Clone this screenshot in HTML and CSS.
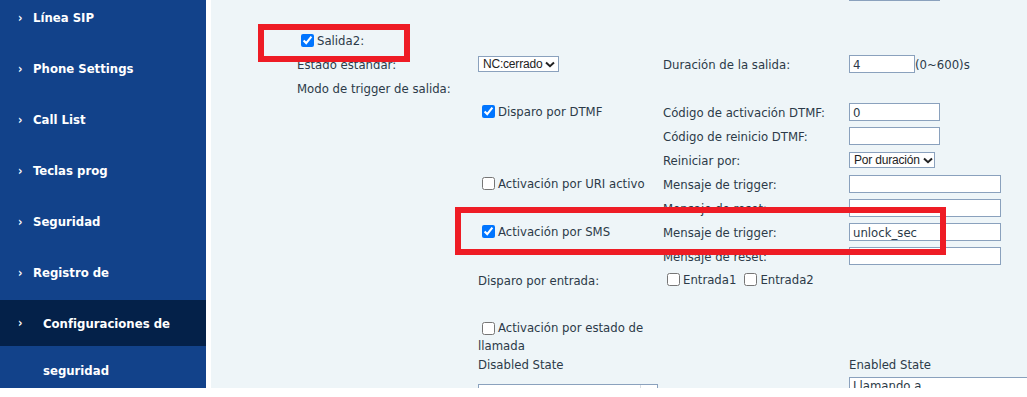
FILE: index.html
```html
<!DOCTYPE html>
<html lang="es">
<head>
<meta charset="utf-8">
<title>Configuraciones de seguridad</title>
<link rel="stylesheet" href="styles.css">
</head>
<body>
<div class="page">
  <nav class="side">
    <ul class="menu">
      <li class="item"><span class="arr">›</span><span class="lbl">Línea SIP</span></li>
      <li class="item"><span class="arr">›</span><span class="lbl">Phone Settings</span></li>
      <li class="item"><span class="arr">›</span><span class="lbl">Call List</span></li>
      <li class="item"><span class="arr">›</span><span class="lbl">Teclas prog</span></li>
      <li class="item"><span class="arr">›</span><span class="lbl">Seguridad</span></li>
      <li class="item"><span class="arr">›</span><span class="lbl">Registro de</span></li>
      <li class="item active">
        <div class="act-line"><span class="arr">›</span><span class="lbl">Configuraciones de</span></div>
        <div class="act-line2"><span class="lbl">seguridad</span></div>
      </li>
    </ul>
  </nav>
  <div class="gap"></div>
  <main class="content">
    <div class="prev"><input class="txt w91" type="text"></div>
    <div class="salida"><label class="cb"><input type="checkbox" checked><span>Salida2:</span></label></div>
    <div class="grid">
      <div class="c1">Estado estándar:</div>
      <div class="c2"><span class="sel w81"><span class="sel-txt">NC:cerrado</span><svg class="chev" width="10" height="7" viewBox="0 0 10 7"><path d="M1 1.5 L5 5.2 L9 1.5" fill="none" stroke="#222" stroke-width="2"/></svg></span></div>
      <div class="c3">Duración de la salida:</div>
      <div class="c4"><input class="txt w66" type="text" value="4"><span class="unit">(0~600)s</span></div>

      <div class="c1">Modo de trigger de salida:</div>
      <div class="c2"></div><div class="c3"></div><div class="c4"></div>

      <div class="c1"></div>
      <div class="c2"><label class="cb"><input type="checkbox" checked><span>Disparo por DTMF</span></label></div>
      <div class="c3">Código de activación DTMF:</div>
      <div class="c4"><input class="txt w91" type="text" value="0"></div>

      <div class="c1"></div><div class="c2"></div>
      <div class="c3">Código de reinicio DTMF:</div>
      <div class="c4"><input class="txt w91" type="text"></div>

      <div class="c1"></div><div class="c2"></div>
      <div class="c3">Reiniciar por:</div>
      <div class="c4"><span class="sel w86"><span class="sel-txt">Por duración</span><svg class="chev" width="10" height="7" viewBox="0 0 10 7"><path d="M1 1.5 L5 5.2 L9 1.5" fill="none" stroke="#222" stroke-width="2"/></svg></span></div>

      <div class="c1"></div>
      <div class="c2"><label class="cb"><input type="checkbox"><span>Activación por URI activo</span></label></div>
      <div class="c3">Mensaje de trigger:</div>
      <div class="c4"><input class="txt w152" type="text"></div>

      <div class="c1"></div><div class="c2"></div>
      <div class="c3">Mensaje de reset:</div>
      <div class="c4"><input class="txt w152" type="text"></div>

      <div class="c1"></div>
      <div class="c2"><label class="cb"><input type="checkbox" checked><span>Activación por SMS</span></label></div>
      <div class="c3">Mensaje de trigger:</div>
      <div class="c4"><input class="txt w152" type="text" value="unlock_sec"></div>

      <div class="c1"></div><div class="c2"></div>
      <div class="c3">Mensaje de reset:</div>
      <div class="c4"><input class="txt w152" type="text"></div>

      <div class="c1"></div>
      <div class="c2">Disparo por entrada:</div>
      <div class="c3"><label class="cb"><input type="checkbox"><span>Entrada1</span></label><label class="cb"><input type="checkbox"><span>Entrada2</span></label></div>
      <div class="c4"></div>
    </div>
    <div class="callstate">
      <label class="cb multi"><input type="checkbox"><span>Activación por estado de</span></label>
      <div class="wrapline">llamada</div>
    </div>
    <div class="states">
      <div class="st-col left">
        <div class="st-title">Disabled State</div>
        <div class="listbox"><div class="lb-bar"></div></div>
      </div>
      <div class="st-col right">
        <div class="st-title">Enabled State</div>
        <div class="textbox">Llamando a</div>
      </div>
    </div>
  </main>
  <div class="mark mark1"></div>
  <div class="mark mark2"></div>
</div>
</body>
</html>
```

FILE: styles.css
```css
html, body {
  margin: 0;
  padding: 0;
  background: #ffffff;
}
body {
  font-family: "DejaVu Sans Condensed", "DejaVu Sans", sans-serif;
  font-size: 13px;
  color: #2c3a48;
}
.page {
  position: relative;
  display: flex;
  height: 388px;
  overflow: hidden;
}
.side {
  width: 206px;
  flex: none;
  background: #12428a;
  color: #ffffff;
  font-weight: bold;
  font-size: 13px;
}
.menu {
  list-style: none;
  margin: -8px 0 0 0;
  padding: 0;
}
.item {
  height: 51px;
  display: flex;
  align-items: center;
}
.arr {
  width: 33px;
  padding-left: 18px;
  box-sizing: border-box;
  font-size: 12px;
  font-weight: bold;
  flex: none;
}
.item.active {
  display: block;
  height: auto;
  margin-top: 2px;
}
.act-line {
  height: 46px;
  background: #042149;
  display: flex;
  align-items: center;
}
.act-line .arr {
  width: 43px;
}
.act-line2 {
  height: 48px;
  display: flex;
  align-items: center;
  padding-left: 43px;
}
.gap {
  width: 5px;
  flex: none;
  background: #ffffff;
}
.content {
  flex: 1;
  background: #eef5f8;
  padding-left: 86px;
}
.prev {
  height: 1px;
  display: flex;
  align-items: flex-end;
  padding-left: 552px;
}
.salida {
  height: 24px;
  margin-top: 27px;
  display: flex;
  align-items: center;
}
.cb {
  display: inline-flex;
  align-items: center;
  white-space: nowrap;
}
.cb input {
  margin: 0 3px 0 4px;
  width: 13px;
  height: 13px;
}
.grid {
  display: grid;
  grid-template-columns: 181px 185px 186px 1fr;
  grid-auto-rows: 24px;
  align-items: center;
  white-space: nowrap;
}
.c3 .cb + .cb {
  margin-left: 4px;
}
.txt {
  box-sizing: border-box;
  height: 18px;
  flex: none;
  border: 1px solid #8aa1bd;
  background: #ffffff;
  font-family: "DejaVu Sans Condensed", "DejaVu Sans", sans-serif;
  font-size: 13px;
  color: #2c3a48;
  padding: 0 3px;
  margin: 0;
  outline: none;
  vertical-align: middle;
}
.w66 { width: 66px; }
.w91 { width: 91px; }
.w152 { width: 152px; }
.w81 { width: 81px; }
.w86 { width: 86px; }
.unit {
  vertical-align: middle;
}
.sel {
  box-sizing: border-box;
  height: 16px;
  display: inline-flex;
  align-items: center;
  justify-content: space-between;
  border: 1px solid #8aa1bd;
  background: #ffffff;
  font-family: "Liberation Sans", Arial, sans-serif;
  font-size: 12px;
  color: #222;
  padding: 0 6px 0 4px;
  vertical-align: middle;
}
.sel-txt {
  letter-spacing: -0.2px;
}
.chev {
  flex: none;
  margin-left: 3px;
}
.callstate {
  padding: 28px 0 0 181px;
  height: 33px;
}
.callstate .cb, .wrapline {
  line-height: 16px;
}
.states {
  display: grid;
  grid-template-columns: 371px 1fr;
  padding-left: 181px;
}
.st-title {
  height: 24px;
  line-height: 24px;
}
.listbox {
  margin-top: 7px;
  width: 180px;
  height: 40px;
  border: 1px solid #8aa1bd;
  background: #ffffff;
  position: relative;
  box-sizing: border-box;
}
.lb-bar {
  position: absolute;
  right: 16px;
  top: 0;
  bottom: 0;
  border-left: 1px solid #d8dde3;
}
.textbox {
  height: 40px;
  border: 1px solid #8aa1bd;
  border-right: none;
  background: #ffffff;
  padding: 0 3px;
  line-height: 16px;
  box-sizing: border-box;
}
.mark {
  position: absolute;
  border: 6px solid #ee1c25;
  box-sizing: border-box;
  pointer-events: none;
}
.mark1 {
  left: 258px;
  top: 24px;
  width: 152px;
  height: 38px;
}
.mark2 {
  left: 455px;
  top: 207px;
  width: 491px;
  height: 48px;
}
```
